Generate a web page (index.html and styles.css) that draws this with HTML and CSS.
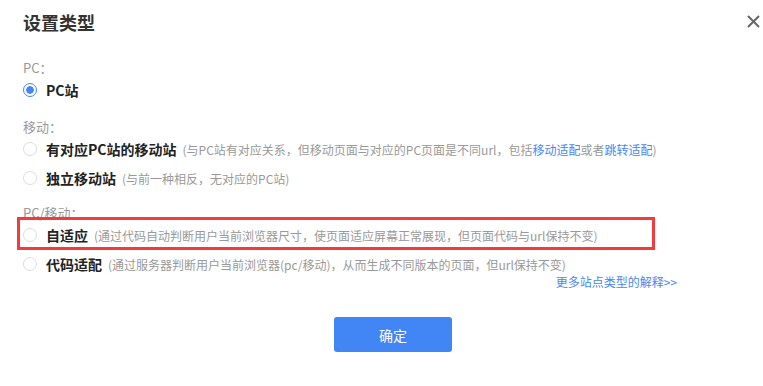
FILE: index.html
```html
<!DOCTYPE html>
<html lang="zh-CN">
<head>
    <meta charset="UTF-8">
    <meta name="viewport" content="width=device-width, initial-scale=1.0">
    <title>设置类型</title>
    <link rel="stylesheet" href="styles.css">
</head>
<body>

    <div class="dialog">
        <div class="dialog-header">
            <h2>设置类型</h2>
            <span class="close" title="关闭">
                <svg width="13" height="13" viewBox="0 0 13 13">
                    <path d="M1 1 L12 12 M12 1 L1 12" stroke="#666" stroke-width="2" fill="none"/>
                </svg>
            </span>
        </div>

        <div class="group group-pc">
            <div class="group-title">PC：</div>
            <label class="option">
                <span class="radio checked"></span>
                <strong>PC站</strong>
            </label>
        </div>

        <div class="group group-mobile">
            <div class="group-title">移动：</div>
            <label class="option">
                <span class="radio"></span>
                <strong>有对应PC站的移动站</strong>
                <span class="desc">(与PC站有对应关系，但移动页面与对应的PC页面是不同url，包括<a href="#">移动适配</a>或者<a href="#">跳转适配</a>)</span>
            </label>
            <label class="option">
                <span class="radio"></span>
                <strong>独立移动站</strong>
                <span class="desc">(与前一种相反，无对应的PC站)</span>
            </label>
        </div>

        <div class="group group-both">
            <div class="group-title">PC/移动：</div>
            <label class="option marked">
                <span class="radio"></span>
                <strong>自适应</strong>
                <span class="desc">(通过代码自动判断用户当前浏览器尺寸，使页面适应屏幕正常展现，但页面代码与url保持不变)</span>
            </label>
            <label class="option">
                <span class="radio"></span>
                <strong>代码适配</strong>
                <span class="desc">(通过服务器判断用户当前浏览器(pc/移动)，从而生成不同版本的页面，但url保持不变)</span>
            </label>
        </div>

        <div class="more">
            <a href="#">更多站点类型的解释&gt;&gt;</a>
        </div>

        <div class="dialog-footer">
            <button class="btn-primary">确定</button>
        </div>
    </div>

</body>
</html>
```

FILE: styles.css
```css
body {
    margin: 0;
    background-color: #fff;
    color: #333;
    font-family: "Noto Sans CJK SC", "Noto Sans", sans-serif;
}
.dialog {
    width: 763px;
    height: 386px;
    padding-left: 23px;
    box-sizing: border-box;
}
.dialog-header {
    display: flex;
    justify-content: space-between;
    align-items: center;
    padding-top: 10px;
    margin-right: 3px;
}
.dialog-header h2 {
    margin: 0;
    font-size: 18px;
    line-height: 24px;
    font-weight: bold;
    color: #333;
}
.close {
    display: flex;
    margin-top: -2px;
    cursor: pointer;
}
.group-title {
    font-size: 13px;
    line-height: 18px;
    color: #999;
}
.group-pc {
    margin-top: 25px;
}
.group-mobile {
    margin-top: 16px;
}
.group-both {
    margin-top: 14px;
}
.option {
    position: relative;
    display: flex;
    align-items: center;
    height: 24px;
    margin-top: 5px;
    white-space: nowrap;
}
.group-title + .option {
    margin-top: 1px;
}
.option strong {
    font-size: 14px;
    color: #222;
}
.radio {
    width: 14px;
    height: 14px;
    margin-right: 9px;
    border: 1px solid #ddd;
    border-radius: 50%;
    box-sizing: border-box;
    flex-shrink: 0;
}
.radio.checked {
    border-color: #4285f4;
    background: radial-gradient(circle, #4285f4 3.5px, #fff 4px);
}
.desc {
    margin-left: 6px;
    font-size: 12px;
    color: #999;
}
.desc a,
.more a {
    color: #4a86f5;
    text-decoration: none;
}
/* red annotation frame around the responsive option */
.option.marked::after {
    content: "";
    position: absolute;
    left: -6px;
    top: -6px;
    width: 638px;
    height: 33px;
    border: 3px solid #f33b3b;
    box-sizing: border-box;
}
.more {
    width: 654px;
    margin-top: -2px;
    text-align: right;
    font-size: 12px;
    line-height: 16px;
}
.dialog-footer {
    display: flex;
    justify-content: center;
    margin-top: 27px;
}
.btn-primary {
    width: 118px;
    height: 35px;
    border: none;
    border-radius: 3px;
    background-color: #4285f4;
    color: #fff;
    font-family: inherit;
    font-size: 14px;
    cursor: pointer;
}
```
